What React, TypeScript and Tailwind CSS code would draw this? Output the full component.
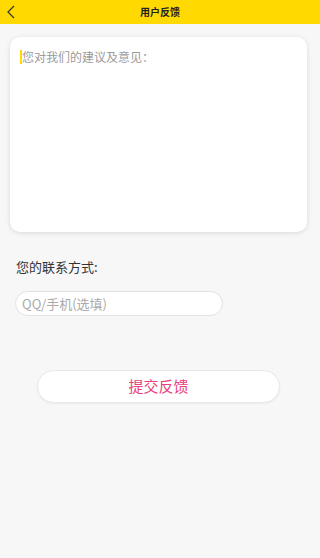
import { useState } from "react"

const font = { fontFamily: '"Noto Sans CJK SC", "Noto Sans", sans-serif' }

export default function App() {
  const [advice, setAdvice] = useState("")
  const [contact, setContact] = useState("")

  return (
    <div className="min-h-[558px] w-[320px] bg-[#f7f7f7]" style={font}>
      <header className="relative flex h-6 items-center justify-center bg-[#ffd900]">
        <button className="absolute left-[3px] top-[4px] flex h-4 w-4 items-center justify-center text-[#333]">
          <svg viewBox="0 0 12 16" className="h-4 w-3" fill="none" stroke="currentColor" strokeWidth="1.2">
            <path d="M9 2 L3 8 L9 14" />
          </svg>
        </button>
        <h1 className="text-[10px] font-bold leading-none text-[#222]">{"用户反馈"}</h1>
      </header>

      <div className="px-[10px] pt-[13px]">
        <div className="relative h-[195px] w-[297px] rounded-[10px] bg-white pl-[12px] pr-[10px] pt-[12px] shadow-[0_1px_5px_rgba(0,0,0,0.12)]">
          {advice === "" && (
            <span className="absolute left-[10px] top-[13px] h-[14px] w-[2px] bg-[#ffd900]" />
          )}
          <textarea
            value={advice}
            onChange={(e) => setAdvice(e.target.value)}
            placeholder="您对我们的建议及意见："
            className="h-full w-full resize-none bg-transparent text-[12px] leading-[16px] text-[#333] caret-[#ffd900] outline-none placeholder:text-[#9a9a9a]"
          />
        </div>
      </div>

      <p className="mt-[26px] pl-[16px] text-[13px] leading-[18px] text-[#333]">{"您的联系方式:"}</p>

      <div className="mt-[14px] pl-[15px]">
        <input
          value={contact}
          onChange={(e) => setContact(e.target.value)}
          placeholder="QQ/手机(选填)"
          className="h-[25px] w-[208px] rounded-full border border-[#e2e2e2] bg-white px-[6px] text-[13px] text-[#333] outline-none placeholder:text-[#aaa]"
        />
      </div>

      <div className="mt-[54px] pl-[37px]">
        <button className="h-[33px] w-[243px] rounded-full border border-[#e8e8e8] bg-white text-[15px] text-[#e8407a] shadow-[0_1px_2px_rgba(0,0,0,0.05)]">
          {"提交反馈"}
        </button>
      </div>
    </div>
  )
}
